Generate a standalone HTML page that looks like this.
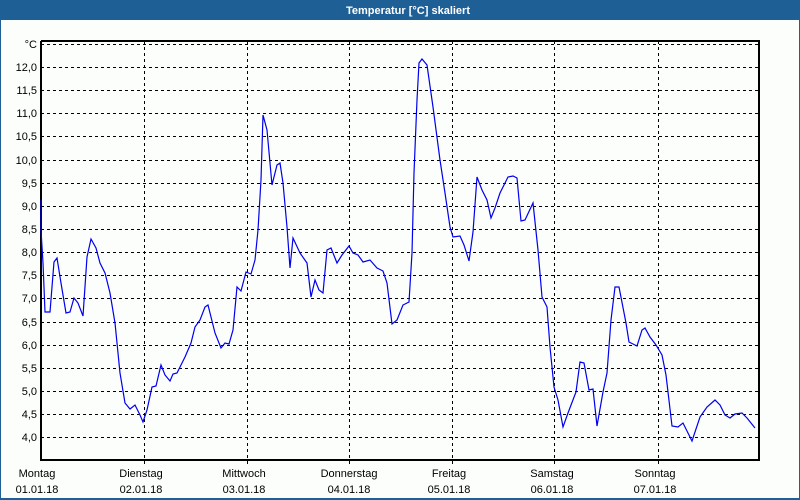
<!DOCTYPE html>
<html><head><meta charset="utf-8"><style>
html,body{margin:0;padding:0;background:#fff;}
svg{display:block;}
text{font-family:"Liberation Sans","DejaVu Sans",sans-serif;font-size:11px;fill:#000;}
</style></head><body>
<svg width="800" height="500" viewBox="0 0 800 500" xmlns="http://www.w3.org/2000/svg">
<rect x="0" y="0" width="800" height="500" fill="#fcfefc"/>
<rect x="0" y="0" width="800" height="20" fill="#1e5f96"/>
<rect x="0" y="0" width="1" height="500" fill="#1e5f96"/>
<rect x="799" y="0" width="1" height="500" fill="#1e5f96"/>
<rect x="0" y="498" width="800" height="2" fill="#1e5f96"/>
<text x="408" y="14" text-anchor="middle" style="font-weight:bold;fill:#fff;font-size:11px">Temperatur [°C] skaliert</text>
<g stroke="#000" stroke-width="1" stroke-dasharray="3,3" shape-rendering="crispEdges">
<line x1="41" x2="760" y1="44.5" y2="44.5"/>
<line x1="41" x2="760" y1="67.5" y2="67.5"/>
<line x1="41" x2="760" y1="90.5" y2="90.5"/>
<line x1="41" x2="760" y1="113.5" y2="113.5"/>
<line x1="41" x2="760" y1="136.5" y2="136.5"/>
<line x1="41" x2="760" y1="160.5" y2="160.5"/>
<line x1="41" x2="760" y1="183.5" y2="183.5"/>
<line x1="41" x2="760" y1="206.5" y2="206.5"/>
<line x1="41" x2="760" y1="229.5" y2="229.5"/>
<line x1="41" x2="760" y1="252.5" y2="252.5"/>
<line x1="41" x2="760" y1="275.5" y2="275.5"/>
<line x1="41" x2="760" y1="298.5" y2="298.5"/>
<line x1="41" x2="760" y1="322.5" y2="322.5"/>
<line x1="41" x2="760" y1="345.5" y2="345.5"/>
<line x1="41" x2="760" y1="368.5" y2="368.5"/>
<line x1="41" x2="760" y1="391.5" y2="391.5"/>
<line x1="41" x2="760" y1="414.5" y2="414.5"/>
<line x1="41" x2="760" y1="437.5" y2="437.5"/>
<line x1="144.5" x2="144.5" y1="41" y2="466"/>
<line x1="247.5" x2="247.5" y1="41" y2="466"/>
<line x1="349.5" x2="349.5" y1="41" y2="466"/>
<line x1="452.5" x2="452.5" y1="41" y2="466"/>
<line x1="554.5" x2="554.5" y1="41" y2="466"/>
<line x1="658.5" x2="658.5" y1="41" y2="466"/>
</g>
<polyline fill="none" stroke="#000" stroke-width="2" points="41,41 759,41 759,460 41,460 41,41" shape-rendering="crispEdges"/>
<g text-anchor="end">
<text x="37" y="48">°C</text>
<text x="37" y="71">12,0</text>
<text x="37" y="94">11,5</text>
<text x="37" y="117">11,0</text>
<text x="37" y="140">10,5</text>
<text x="37" y="164">10,0</text>
<text x="37" y="187">9,5</text>
<text x="37" y="210">9,0</text>
<text x="37" y="233">8,5</text>
<text x="37" y="256">8,0</text>
<text x="37" y="279">7,5</text>
<text x="37" y="302">7,0</text>
<text x="37" y="326">6,5</text>
<text x="37" y="349">6,0</text>
<text x="37" y="372">5,5</text>
<text x="37" y="395">5,0</text>
<text x="37" y="418">4,5</text>
<text x="37" y="441">4,0</text>
</g>
<g text-anchor="middle">
<text x="37" y="477">Montag</text><text x="37" y="493">01.01.18</text>
<text x="141" y="477">Dienstag</text><text x="141" y="493">02.01.18</text>
<text x="244" y="477">Mittwoch</text><text x="244" y="493">03.01.18</text>
<text x="349" y="477">Donnerstag</text><text x="349" y="493">04.01.18</text>
<text x="449" y="477">Freitag</text><text x="449" y="493">05.01.18</text>
<text x="552" y="477">Samstag</text><text x="552" y="493">06.01.18</text>
<text x="655" y="477">Sonntag</text><text x="655" y="493">07.01.18</text>
</g>
<polyline fill="none" stroke="#0000ee" stroke-width="1.2" points="41,200 41,230 43,263 45,312 50,312 54,262 57,258 61,283 66,313 70,312 74,298 78,303 83,316 87,257 91,239 96,248 100,263 105,273 110,293 115,323 120,373 125,403 130,409 135,405 140,415 143,422 147,410 152,387 156,386 161,365 165,375 170,381 173,374 177,373 185,357 191,343 195,327 200,320 205,307 208,305 215,333 221,348 225,343 229,344 233,330 237,287 241,291 246,272 251,274 255,260 258,230 261,180 263,115 267,130 272,185 277,165 280,163 283,183 287,227 290,268 293,238 300,253 307,263 311,297 315,280 319,290 323,293 327,250 331,248 337,263 342,255 349,246 353,253 358,255 363,262 370,260 377,268 383,271 387,283 392,324 397,320 403,305 409,302 412,253 414,173 417,100 419,63 422,59 427,65 433,107 440,160 445,193 450,227 453,237 460,236 464,245 469,261 473,232 477,177 482,190 487,200 491,218 495,208 500,193 508,177 513,176 517,178 521,221 525,220 533,203 538,250 542,297 547,307 550,347 554,387 558,400 563,427 568,413 576,392 580,362 584,363 589,390 593,389 597,426 603,392 607,373 611,320 615,287 619,287 626,323 629,342 637,346 642,330 645,328 650,337 656,345 662,355 666,375 672,426 678,427 683,423 692,441 700,417 707,407 715,400 720,405 725,415 730,418 735,414 742,413 747,418 755,428"/>
</svg>
</body></html>
